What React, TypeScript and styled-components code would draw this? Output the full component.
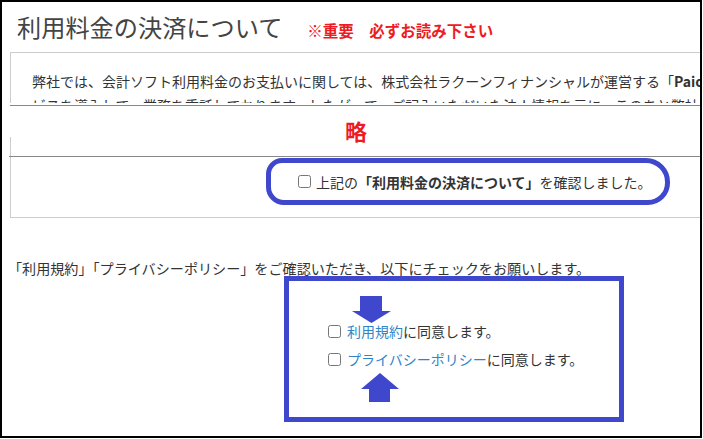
import React from 'react'
import styled, { createGlobalStyle } from 'styled-components';

const GlobalStyle = createGlobalStyle`
  html, body {
    margin: 0;
    padding: 0;
    background: #fff;
  }
  body {
    font-family: "Noto Sans CJK JP", "Noto Sans", sans-serif;
    color: #333;
  }
`;

const Frame = styled.div`
  width: 702px;
  height: 438px;
  box-sizing: border-box;
  border: 2px solid #000;
  overflow: hidden;
  background: #fff;
`;

const Header = styled.div`
  height: 50px;
  box-sizing: border-box;
  padding: 7px 0 0 15px;
  display: flex;
  align-items: baseline;
  white-space: nowrap;
`;

const Title = styled.h1`
  margin: 0;
  font-size: 24.2px;
  line-height: 36px;
  font-weight: 400;
  color: #444;
`;

const Notice = styled.span`
  margin-left: 25px;
  font-size: 15.5px;
  font-weight: 700;
  color: #ed1c24;
`;

const NoticeBox = styled.div`
  margin-left: 8px;
  width: 1000px;
  height: 51px;
  box-sizing: border-box;
  border-top: 1px solid #ccc;
  border-left: 1px solid #ccc;
  padding: 16px 0 0 21px;
  overflow: hidden;
  white-space: nowrap;
  font-size: 14px;
  line-height: 24px;

  b {
    font-weight: 700;
  }
`;

const CutLine = styled.div<{ $top: number; $left: number }>`
  margin: ${(p) => p.$top}px 0 0 ${(p) => p.$left}px;
  width: 1000px;
  height: 1px;
  background: #888;
`;

const Abbrev = styled.div`
  height: 31px;
  box-sizing: border-box;
  padding: 12px 0 0 343px;
  font-size: 22px;
  line-height: 24px;
  font-weight: 700;
  color: #ed1c24;
`;

const ConfirmBox = styled.div`
  display: flow-root;
  margin-left: 8px;
  width: 1000px;
  height: 81px;
  box-sizing: border-box;
  border-left: 1px solid #ccc;
  border-bottom: 1px solid #ccc;
`;

const ConfirmRow = styled.div`
  margin-top: 1px;
  padding-left: 255px;
`;

const Oval = styled.label`
  display: inline-flex;
  align-items: center;
  height: 47px;
  box-sizing: border-box;
  border: 5px solid #3f48cc;
  border-radius: 16px 24px 22px 18px;
  padding: 0 13px 0 27px;
  font-size: 14px;
  white-space: nowrap;

  b {
    font-weight: 700;
  }
`;

const Check = styled.input.attrs({ type: 'checkbox' })`
  width: 13px;
  height: 13px;
  margin: 0 5px 0 0;
`;

const Guide = styled.p`
  margin: 40px 0 0 6px;
  font-size: 14.1px;
  line-height: 20px;
  white-space: nowrap;
`;

const AgreeBox = styled.div`
  margin: -2px 0 0 282px;
  width: 340px;
  height: 146px;
  box-sizing: border-box;
  border: 5px solid #3f48cc;
  padding-top: 15px;
  display: flex;
  flex-direction: column;
`;

const Arrow = styled.svg<{ $left: number }>`
  display: block;
  margin-left: ${(p) => p.$left}px;
`;

const AgreeList = styled.div`
  margin-top: -3px;
  padding-left: 39px;
  display: flex;
  flex-direction: column;
  gap: 8px;
`;

const AgreeRow = styled.label`
  display: flex;
  align-items: center;
  height: 20px;
  font-size: 14px;
  white-space: nowrap;

  input {
    margin-right: 6px;
  }
`;

const Link = styled.a`
  color: #2e86c9;
  text-decoration: none;
`;

const UpArrowWrap = styled.div`
  margin-top: 4px;
`;

const App = () => {
  return (
    <Frame>
      <GlobalStyle />
      <Header>
        <Title>利用料金の決済について</Title>
        <Notice>※重要　必ずお読み下さい</Notice>
      </Header>
      <NoticeBox>
        弊社では、会計ソフト利用料金のお支払いに関しては、株式会社ラクーンフィナンシャルが運営する「<b>Paid</b>」サー
        <br />
        ビスを導入して、業務を委託しております。したがって、ご記入いただいた法人情報を元に、このあと弊社から
      </NoticeBox>
      <CutLine $top={2} $left={8} />
      <Abbrev>略</Abbrev>
      <ConfirmBox>
        <CutLine $top={19} $left={-2} />
        <ConfirmRow>
          <Oval>
            <Check />
            上記の<b>「利用料金の決済について」</b>を確認しました。
          </Oval>
        </ConfirmRow>
      </ConfirmBox>
      <Guide>「利用規約」「プライバシーポリシー」をご確認いただき、以下にチェックをお願いします。</Guide>
      <AgreeBox>
        <Arrow $left={63} width="40" height="28" viewBox="0 0 40 28">
          <polygon points="8,0 30,0 30,15 39,15 19.5,27 0,15 8,15" fill="#3f48cc" />
        </Arrow>
        <AgreeList>
          <AgreeRow>
            <Check />
            <Link>利用規約</Link>に同意します。
          </AgreeRow>
          <AgreeRow>
            <Check />
            <Link>プライバシーポリシー</Link>に同意します。
          </AgreeRow>
        </AgreeList>
        <UpArrowWrap>
          <Arrow $left={72} width="39" height="30" viewBox="0 0 39 30">
            <polygon points="19,0 38,16 29,16 29,29 8,29 8,16 0,16" fill="#3f48cc" />
          </Arrow>
        </UpArrowWrap>
      </AgreeBox>
    </Frame>
  );
}

export default App
